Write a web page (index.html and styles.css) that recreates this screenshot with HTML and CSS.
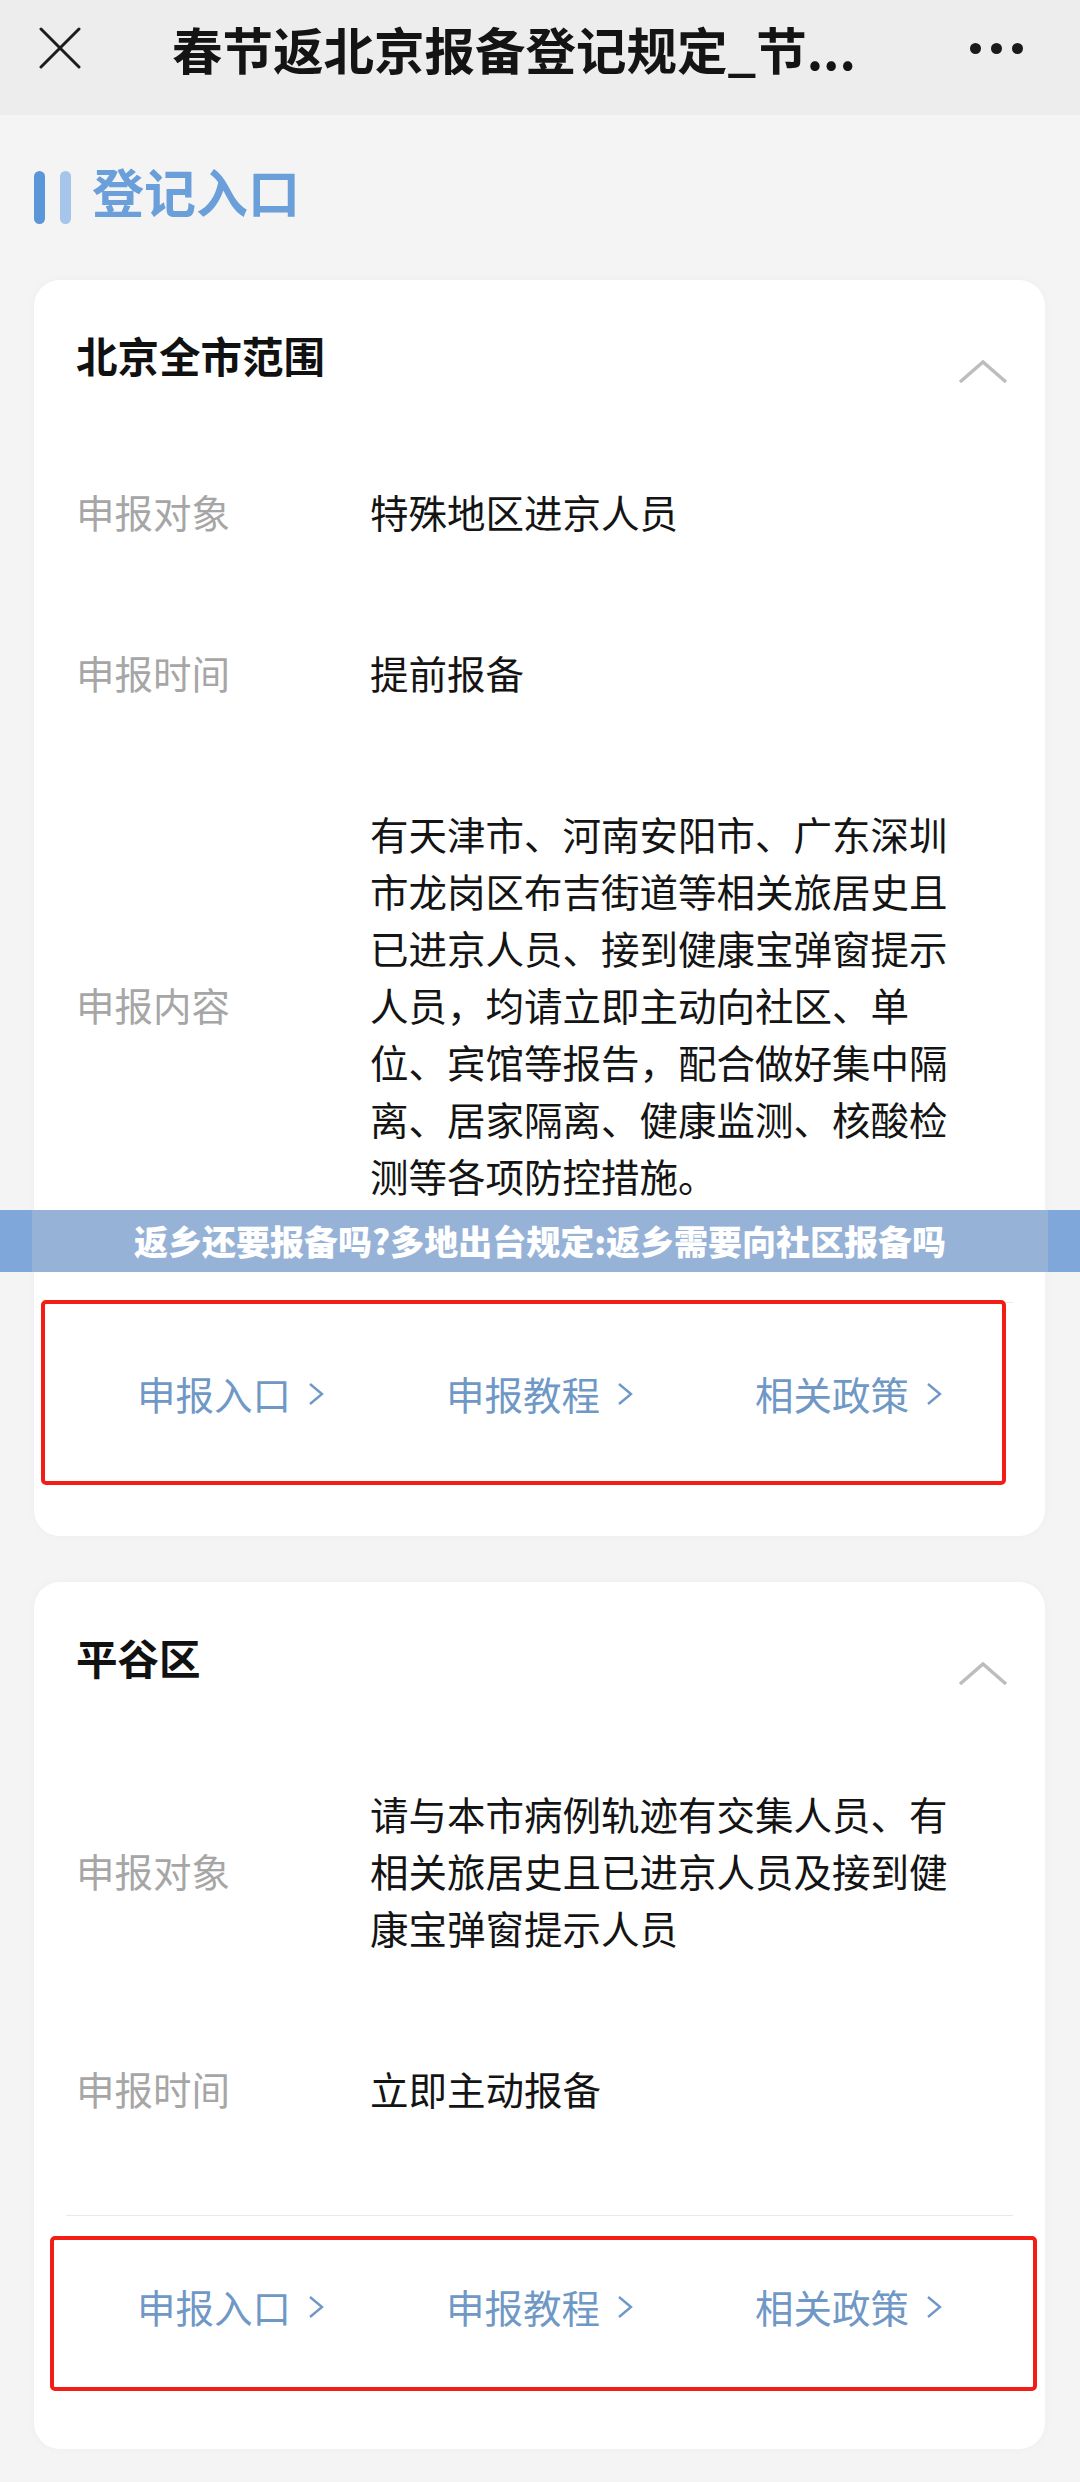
FILE: index.html
```html
<!DOCTYPE html>
<html lang="zh-CN">
<head>
    <meta charset="UTF-8">
    <meta name="viewport" content="width=device-width, initial-scale=1.0">
    <title>春节返北京报备登记规定</title>
    <link rel="stylesheet" href="styles.css">
</head>
<body>
    <header class="topbar">
        <svg class="close-icon" width="42" height="42" viewBox="0 0 42 42">
            <path d="M2 2 L40 40 M40 2 L2 40" stroke="#1c1c1c" stroke-width="3" fill="none" stroke-linecap="round"/>
        </svg>
        <div class="topbar-title">春节返北京报备登记规定_节...</div>
        <div class="more"><span></span><span></span><span></span></div>
    </header>

    <main class="page">
        <h2 class="section-title">
            <span class="bar"></span><span class="bar light"></span>登记入口
        </h2>

        <!-- 北京全市范围 -->
        <section class="card">
            <div class="card-head">
                <h3>北京全市范围</h3>
                <svg class="fold" width="50" height="24" viewBox="0 0 50 24">
                    <polyline points="2,22 25,2 48,22" stroke="#bdbdbd" stroke-width="3.5" fill="none"/>
                </svg>
            </div>
            <div class="rows">
                <div class="row">
                    <div class="label">申报对象</div>
                    <div class="value">特殊地区进京人员</div>
                </div>
                <div class="row">
                    <div class="label">申报时间</div>
                    <div class="value">提前报备</div>
                </div>
                <div class="row">
                    <div class="label">申报内容</div>
                    <div class="value">有天津市、河南安阳市、广东深圳市龙岗区布吉街道等相关旅居史且已进京人员、接到健康宝弹窗提示人员，均请立即主动向社区、单位、宾馆等报告，配合做好集中隔离、居家隔离、健康监测、核酸检测等各项防控措施。</div>
                </div>
            </div>
            <div class="links">
                <a href="#">申报入口 <svg class="arrow" width="16" height="22" viewBox="0 0 16 22"><polyline points="2,1 14,11 2,21" fill="none" stroke="#6f98c6" stroke-width="2.4"/></svg></a>
                <a href="#">申报教程 <svg class="arrow" width="16" height="22" viewBox="0 0 16 22"><polyline points="2,1 14,11 2,21" fill="none" stroke="#6f98c6" stroke-width="2.4"/></svg></a>
                <a href="#">相关政策 <svg class="arrow" width="16" height="22" viewBox="0 0 16 22"><polyline points="2,1 14,11 2,21" fill="none" stroke="#6f98c6" stroke-width="2.4"/></svg></a>
                <div class="mark mark-first"></div>
            </div>
        </section>

        <!-- 平谷区 -->
        <section class="card">
            <div class="card-head">
                <h3>平谷区</h3>
                <svg class="fold" width="50" height="24" viewBox="0 0 50 24">
                    <polyline points="2,22 25,2 48,22" stroke="#bdbdbd" stroke-width="3.5" fill="none"/>
                </svg>
            </div>
            <div class="rows">
                <div class="row">
                    <div class="label">申报对象</div>
                    <div class="value">请与本市病例轨迹有交集人员、有相关旅居史且已进京人员及接到健康宝弹窗提示人员</div>
                </div>
                <div class="row">
                    <div class="label">申报时间</div>
                    <div class="value">立即主动报备</div>
                </div>
            </div>
            <div class="links">
                <a href="#">申报入口 <svg class="arrow" width="16" height="22" viewBox="0 0 16 22"><polyline points="2,1 14,11 2,21" fill="none" stroke="#6f98c6" stroke-width="2.4"/></svg></a>
                <a href="#">申报教程 <svg class="arrow" width="16" height="22" viewBox="0 0 16 22"><polyline points="2,1 14,11 2,21" fill="none" stroke="#6f98c6" stroke-width="2.4"/></svg></a>
                <a href="#">相关政策 <svg class="arrow" width="16" height="22" viewBox="0 0 16 22"><polyline points="2,1 14,11 2,21" fill="none" stroke="#6f98c6" stroke-width="2.4"/></svg></a>
                <div class="mark mark-second"></div>
            </div>
        </section>
    </main>

    <div class="banner">返乡还要报备吗?多地出台规定:返乡需要向社区报备吗</div>
</body>
</html>
```

FILE: styles.css
```css
* {
    margin: 0;
    padding: 0;
    box-sizing: border-box;
}

body {
    position: relative;
    background-color: #f4f4f4;
    color: #111;
    font-family: "Noto Sans CJK SC", "Noto Sans", sans-serif;
}

/* Top bar */
.topbar {
    height: 115px;
    display: flex;
    align-items: center;
    padding: 0 57px 19px 39px;
    background-color: #ededed;
}

.close-icon {
    flex: none;
}

.topbar-title {
    flex: 1;
    margin-left: 91px;
    font-size: 50.5px;
    line-height: 60px;
    font-weight: 700;
    color: #141414;
    white-space: nowrap;
}

.more {
    display: flex;
    gap: 10px;
}

.more span {
    width: 11px;
    height: 11px;
    border-radius: 50%;
    background-color: #1a1a1a;
}

/* Page */
.page {
    padding: 0 35px 38px 34px;
}

.section-title {
    display: flex;
    align-items: center;
    padding-top: 43px;
    font-size: 52px;
    line-height: 60px;
    font-weight: 700;
    color: #6b9fd9;
}

.section-title .bar {
    width: 11px;
    height: 53px;
    margin-top: 13px;
    margin-right: 15px;
    border-radius: 6px;
    background-color: #5a96d8;
}

.section-title .bar.light {
    margin-right: 21px;
    background-color: #a5c5ea;
}

/* Cards */
.card {
    margin-top: 56px;
    padding: 0 42px;
    background-color: #fff;
    border-radius: 26px;
    box-shadow: 0 0 8px rgba(0, 0, 0, 0.03);
}

.card + .card {
    margin-top: 46px;
}

.card-head {
    display: flex;
    justify-content: space-between;
    align-items: flex-start;
    padding: 47px 0;
}

.card-head h3 {
    font-size: 41.5px;
    line-height: 57px;
    font-weight: 700;
    color: #111;
}

.card-head .fold {
    margin-top: 33px;
    margin-right: -5px;
}

.rows {
    padding-bottom: 46px;
}

.row {
    display: flex;
    align-items: center;
    padding: 52px 0;
    font-size: 38.5px;
    line-height: 57px;
}

.label {
    flex: 0 0 294px;
    color: #a6a6a6;
}

.value {
    width: 592px;
    color: #141414;
}

/* Links */
.links {
    position: relative;
    display: grid;
    grid-template-columns: repeat(3, 1fr);
    margin: 0 -10px;
    padding: 62px 10px 114px;
    border-top: 1px solid #e9e9e9;
}

.links a {
    display: flex;
    align-items: center;
    justify-content: center;
    gap: 17px;
    font-size: 38.5px;
    line-height: 57px;
    color: #6f98c6;
    text-decoration: none;
}

/* red annotation boxes drawn over the screenshot */
.mark {
    position: absolute;
    border: 4px solid #f31d16;
    border-radius: 5px;
}

.mark-first {
    left: -25px;
    top: -3px;
    width: 965px;
    height: 185px;
}

.mark-second {
    left: -16px;
    top: 20px;
    width: 987px;
    height: 155px;
}

/* watermark banner over the page */
.banner {
    position: absolute;
    top: 1210px;
    left: 0;
    right: 0;
    height: 62px;
    background: linear-gradient(to right, #80a7d9 32px, #96b2d7 32px, #96b2d7 1048px, #80a7d9 1048px);
    color: #fff;
    text-align: center;
    font-size: 34px;
    line-height: 62px;
    font-weight: 900;
    white-space: nowrap;
}
```
